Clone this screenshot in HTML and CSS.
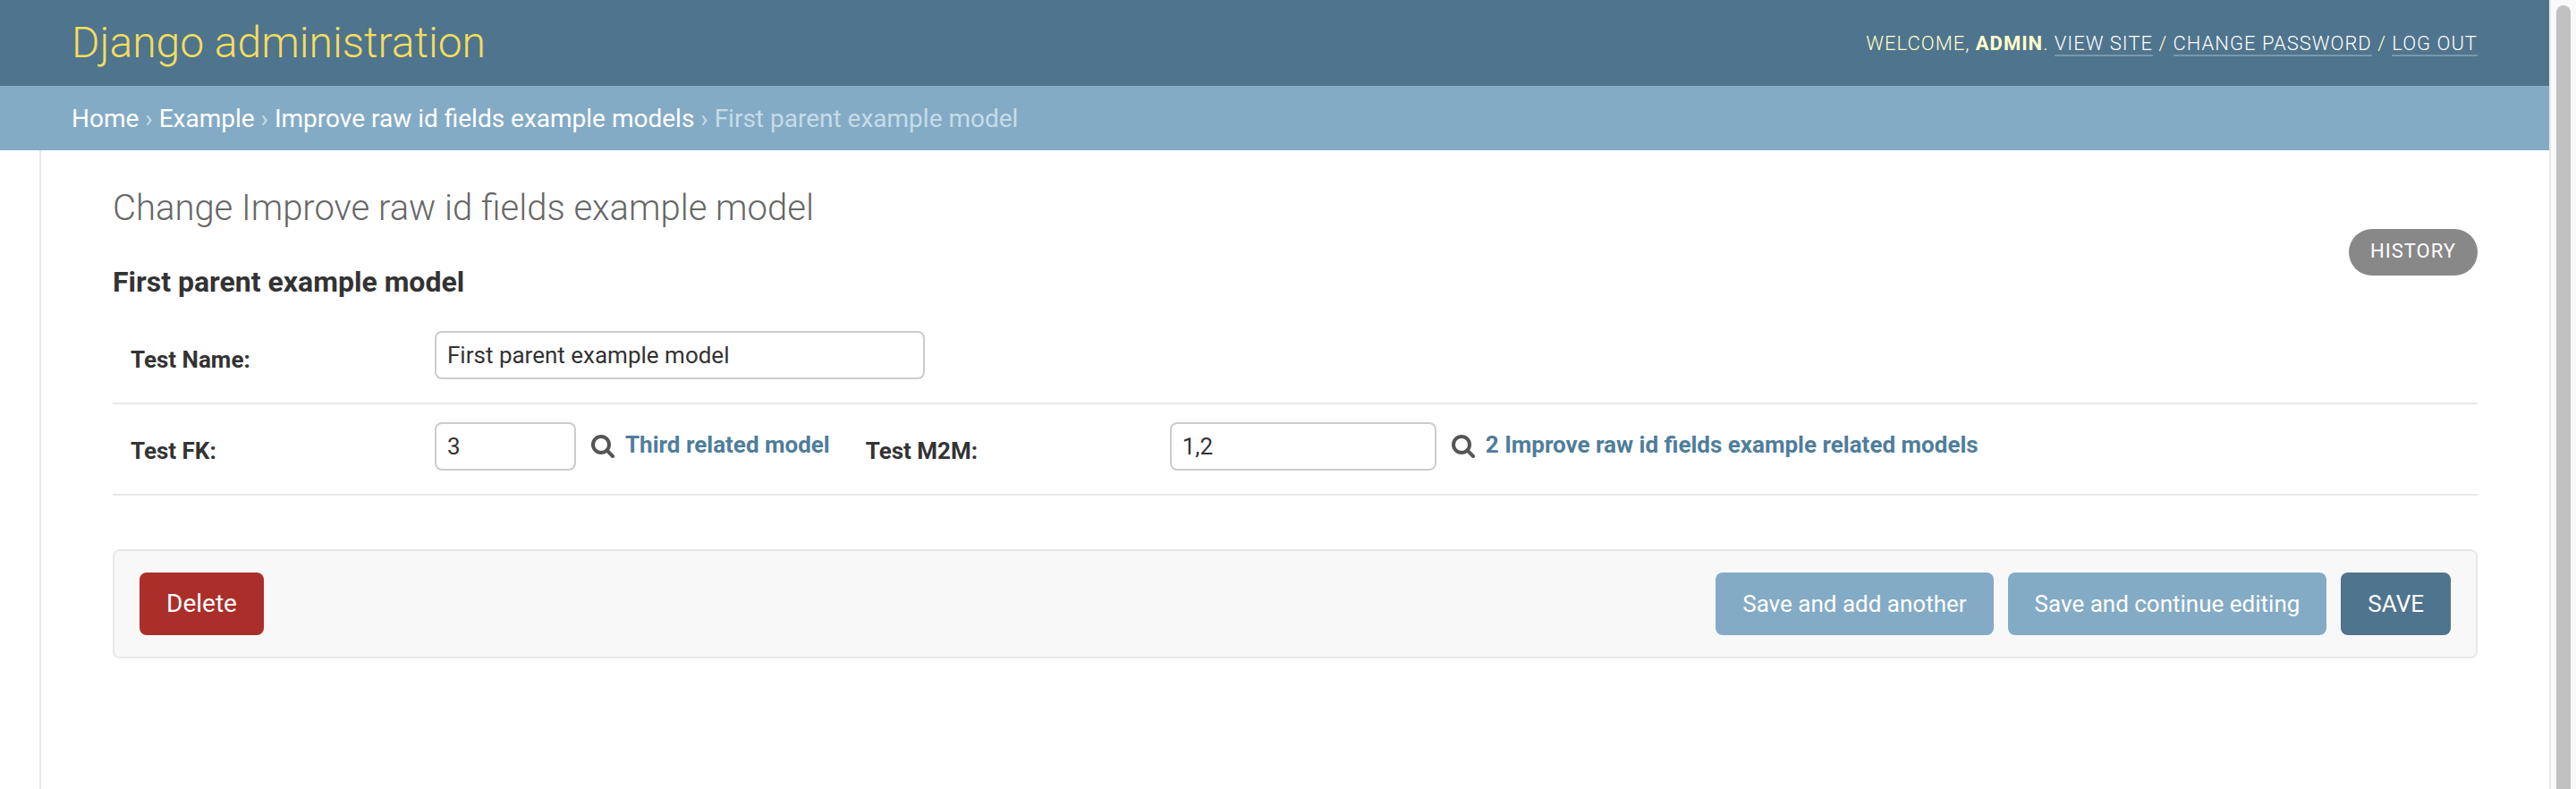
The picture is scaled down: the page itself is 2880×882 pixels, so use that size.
FILE: index.html
```html
<!DOCTYPE html>
<html lang="en">
<head>
<meta charset="utf-8">
<title>First parent example model | Change Improve raw id fields example model | Django site admin</title>
<link rel="stylesheet" href="styles.css">
</head>
<body>
<div class="page">
  <header class="header">
    <div class="site-name"><a href="#">Django administration</a></div>
    <div class="user-tools">
      Welcome, <strong>admin</strong>.
      <a href="#">View site</a> /
      <a href="#">Change password</a> /
      <a href="#">Log out</a>
    </div>
  </header>
  <nav class="breadcrumbs" aria-label="Breadcrumbs">
    <a href="#">Home</a> &rsaquo; <a href="#">Example</a> &rsaquo; <a href="#">Improve raw id fields example models</a> &rsaquo; First parent example model
  </nav>
  <div class="main">
    <div class="nav-toggle"></div>
    <main class="content">
      <div class="title-bar">
        <div>
          <h1>Change Improve raw id fields example model</h1>
          <h2>First parent example model</h2>
        </div>
        <a class="history" href="#">History</a>
      </div>
      <form>
        <div class="form-row">
          <div class="field">
            <label for="test-name">Test Name:</label>
            <input class="text-input name-input" id="test-name" type="text" value="First parent example model">
          </div>
        </div>
        <div class="form-row">
          <div class="field">
            <label for="test-fk">Test FK:</label>
            <input class="text-input fk-input" id="test-fk" type="text" value="3">
            <a class="lookup" href="#" aria-label="Lookup"><svg class="lookup-icon" viewBox="0 0 28 28"><circle cx="12" cy="12" r="9"/><path d="M18.5 18.5 25 25"/></svg></a>
            <a class="related" href="#">Third related model</a>
          </div>
          <div class="field">
            <label for="test-m2m">Test M2M:</label>
            <input class="text-input m2m-input" id="test-m2m" type="text" value="1,2">
            <a class="lookup" href="#" aria-label="Lookup"><svg class="lookup-icon" viewBox="0 0 28 28"><circle cx="12" cy="12" r="9"/><path d="M18.5 18.5 25 25"/></svg></a>
            <a class="related" href="#">2 Improve raw id fields example related models</a>
          </div>
        </div>
        <div class="submit-row">
          <a class="button delete" href="#">Delete</a>
          <button class="button" type="button">Save and add another</button>
          <button class="button" type="button">Save and continue editing</button>
          <button class="button default" type="button">SAVE</button>
        </div>
      </form>
    </main>
  </div>
</div>
<div class="scrollbar"><div class="thumb"></div></div>
</body>
</html>
```
FILE: styles.css
```css
* {
  box-sizing: border-box;
}

body {
  display: flex;
  min-height: 100vh;
  margin: 0;
  background: #fff;
  color: #333;
  font-family: Roboto, "Liberation Sans", sans-serif;
  font-size: 26px;
}

a {
  color: inherit;
  text-decoration: none;
}

.page {
  display: flex;
  flex: 1;
  flex-direction: column;
}

.header {
  display: flex;
  align-items: center;
  justify-content: space-between;
  padding: 20px 80px;
  background: #4f748d;
  color: #ffc;
}

.site-name {
  color: #f5dd5d;
  font-size: 48px;
  font-weight: 300;
  line-height: 56px;
}

.user-tools {
  font-size: 22px;
  font-weight: 300;
  letter-spacing: 1px;
  text-transform: uppercase;
}

.user-tools strong {
  font-weight: 700;
}

.user-tools a {
  border-bottom: 2px solid rgba(255, 255, 255, 0.25);
  color: #fff;
}

.breadcrumbs {
  padding: 20px 80px 18px;
  background: #84abc5;
  color: #c4dce8;
  font-size: 28px;
  line-height: 34px;
}

.breadcrumbs a {
  color: #fff;
}

.main {
  display: flex;
  flex: 1;
}

.nav-toggle {
  width: 46px;
  border-right: 2px solid #e8e8e8;
}

.content {
  flex: 1;
  padding: 40px 80px;
}

.title-bar {
  display: flex;
  align-items: flex-start;
  justify-content: space-between;
}

h1 {
  margin: 0 0 38px;
  color: #666;
  font-size: 40px;
  font-weight: 300;
  line-height: 50px;
}

h2 {
  margin: 0 0 16px;
  font-size: 32px;
  font-weight: 700;
  line-height: 38px;
}

.history {
  margin-top: 48px;
  padding: 12px 24px 14px;
  border-radius: 30px;
  background: #888;
  color: #fff;
  font-size: 22px;
  letter-spacing: 1px;
  line-height: 26px;
  text-transform: uppercase;
}

.form-row {
  display: flex;
  gap: 40px;
  padding: 20px 20px 26px;
  border-bottom: 2px solid #e8e8e8;
}

.field {
  display: flex;
  align-items: flex-start;
}

.field label {
  width: 340px;
  padding-top: 16px;
  font-weight: 700;
  line-height: 32px;
}

.text-input {
  height: 54px;
  padding: 0 12px;
  border: 2px solid #ccc;
  border-radius: 8px;
  background: #fff;
  color: #333;
  font: inherit;
}

.name-input {
  width: 548px;
}

.fk-input {
  width: 158px;
}

.m2m-input {
  width: 298px;
}

.lookup {
  display: flex;
  padding: 13px 11px 0 16px;
}

.lookup-icon {
  width: 28px;
  height: 28px;
  fill: none;
  stroke: #555;
  stroke-linecap: round;
  stroke-width: 4;
}

.related {
  padding-top: 8px;
  color: #4f7d9a;
  font-weight: 700;
  line-height: 34px;
}

.submit-row {
  display: flex;
  gap: 16px;
  margin-top: 60px;
  padding: 24px 28px;
  border: 2px solid #e8e8e8;
  border-radius: 8px;
  background: #f8f8f8;
}

.button {
  height: 70px;
  padding: 0 30px;
  border: 0;
  border-radius: 8px;
  background: #84abc5;
  color: #fff;
  font: inherit;
  line-height: 70px;
}

.default {
  background: #4f748d;
}

.delete {
  margin-right: auto;
  background: #aa2f2a;
  font-size: 28px;
}

.scrollbar {
  display: flex;
  width: 30px;
  padding: 6px 6px 0;
  border-left: 2px solid #e8e8e8;
  background: #fafafa;
}

.thumb {
  width: 16px;
  border-radius: 8px 8px 0 0;
  background: #c1c1c1;
}
```
